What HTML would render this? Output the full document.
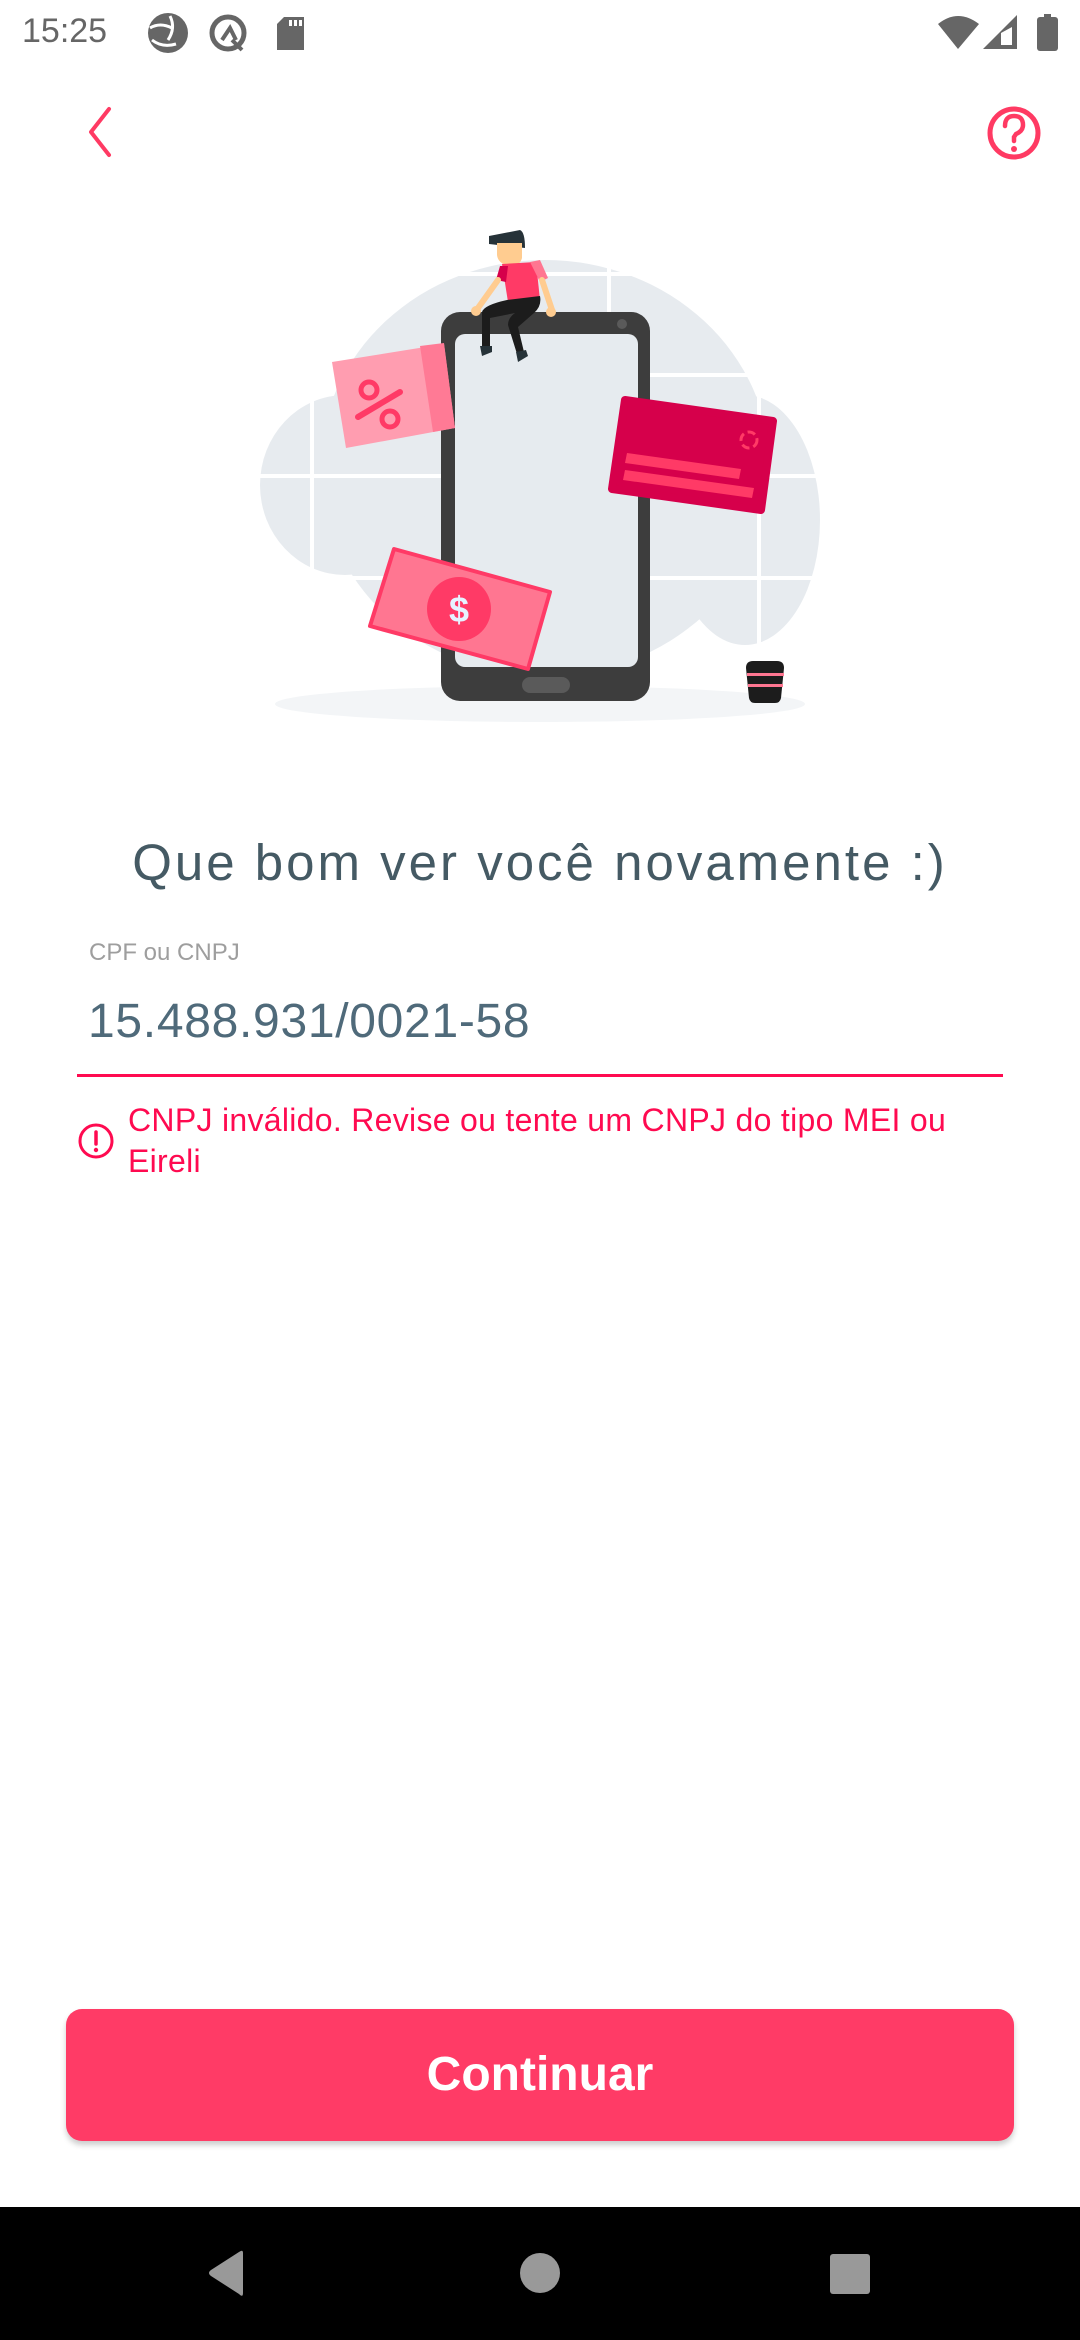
<!DOCTYPE html>
<html><head><meta charset="utf-8"><style>
*{margin:0;padding:0;box-sizing:border-box}
body{width:1080px;height:2340px;background:#fff;position:relative;overflow:hidden;font-family:"Liberation Sans",sans-serif}
.a{position:absolute;white-space:nowrap}
</style></head><body>
<div class="a" style="left:22px;top:14px;font-size:34px;line-height:34px;color:#666">15:25</div>
<svg class="a" style="left:0;top:0" width="1080" height="70">
<circle cx="168" cy="33" r="20" fill="#666"/>
<path d="M150 28 Q160 22 172 28 M170 16 Q176 28 168 40 M152 40 Q162 48 176 44" stroke="#fff" stroke-width="3" fill="none"/>
<circle cx="228" cy="33" r="16" fill="none" stroke="#666" stroke-width="5"/>
<path d="M222 40 L230 28 L236 40 M232 40 L242 50" stroke="#666" stroke-width="4" fill="none"/>
<path d="M284 17 H304 V50 H277 V24 Z" fill="#666"/>
<rect x="289" y="20" width="3" height="6" fill="#fff"/><rect x="294" y="20" width="3" height="6" fill="#fff"/><rect x="299" y="20" width="3" height="6" fill="#fff"/>
<path d="M938 24 Q958 8 979 24 L958 49 Z" fill="#666"/>
<path d="M1017 15 V49 H983 Z" fill="#666"/><path d="M1001 33 V45 H1012 V27 Z" fill="#fff"/>
<rect x="1044" y="14" width="7" height="4" fill="#666"/><rect x="1037" y="17" width="21" height="34" rx="3" fill="#666"/>
</svg>
<svg class="a" style="left:0;top:0" width="1080" height="200">
<path d="M109 109 L91 132 L109 155" stroke="#ff3a63" stroke-width="4" fill="none" stroke-linecap="round" stroke-linejoin="round"/>
<circle cx="1014" cy="133" r="24" fill="none" stroke="#ff3a63" stroke-width="5"/>
<path d="M1005 126 Q1005 116 1014 116 Q1023 116 1023 125 Q1023 131 1016 134 L1014 137 V141" stroke="#ff3a63" stroke-width="4.5" fill="none" stroke-linecap="round"/>
<circle cx="1014" cy="149" r="3" fill="#ff3a63"/>
</svg>
<svg class="a" style="left:0;top:200px" width="1080" height="560" viewBox="0 200 1080 560">
<ellipse cx="540" cy="704" rx="265" ry="18" fill="#f3f5f7"/>
<ellipse cx="545" cy="468" rx="225" ry="208" fill="#e7ebef"/>
<ellipse cx="345" cy="485" rx="85" ry="90" fill="#e7ebef"/>
<ellipse cx="745" cy="520" rx="75" ry="125" fill="#e7ebef"/>
<g stroke="#fff" stroke-width="4">
<line x1="250" y1="274" x2="830" y2="274"/><line x1="250" y1="375" x2="830" y2="375"/>
<line x1="250" y1="476" x2="830" y2="476"/><line x1="250" y1="578" x2="830" y2="578"/>
<line x1="312" y1="380" x2="312" y2="640"/><line x1="609" y1="262" x2="609" y2="680"/>
<line x1="759" y1="320" x2="759" y2="680"/>
</g>
<rect x="441" y="312" width="209" height="389" rx="19" fill="#3d3d3d"/>
<rect x="455" y="334" width="183" height="333" rx="10" fill="#e6ebef"/>
<rect x="522" y="677" width="48" height="16" rx="8" fill="#5a5a5a"/>
<circle cx="622" cy="324" r="5" fill="#5a5a5a"/>
<path d="M332 362 L444 344 L455 428 L346 448 Z" fill="#ff9db0"/>
<path d="M420 346 L444 343 L455 428 L433 432 Z" fill="#ff7a95"/>
<line x1="358" y1="417" x2="400" y2="392" stroke="#ff3a66" stroke-width="6" stroke-linecap="round"/>
<circle cx="369" cy="390" r="8" fill="none" stroke="#ff3a66" stroke-width="5"/>
<circle cx="390" cy="419" r="8" fill="none" stroke="#ff3a66" stroke-width="5"/>
<path d="M625 400 L773 421 L761 510 L612 489 Z" fill="#d6004b" stroke="#d6004b" stroke-width="8" stroke-linejoin="round"/>
<path d="M627 453 L741 469 L739 479 L625 463 Z" fill="#ff3a66"/>
<path d="M625 470 L754 488 L752 498 L623 480 Z" fill="#ff3a66"/>
<circle cx="749" cy="440" r="8" fill="none" stroke="#ff3a66" stroke-width="3" stroke-dasharray="8 4"/>
<path d="M394 549 L550 592 L528 669 L370 626 Z" fill="#ff7691" stroke="#ff3a66" stroke-width="4" stroke-linejoin="round"/>
<circle cx="459" cy="609" r="32" fill="#ff3a66"/>
<text x="459" y="622" font-size="36" font-weight="bold" fill="#e6f2ff" text-anchor="middle" font-family="Liberation Sans,sans-serif">$</text>
<path d="M746 668 Q746 661 753 661 H777 Q784 661 784 668 L781 698 Q780 703 775 703 H755 Q750 703 749 698 Z" fill="#1c1c1c"/>
<rect x="747" y="673" width="37" height="3" fill="#ff7691"/><rect x="748" y="684" width="35" height="3" fill="#ff7691"/>
<path d="M489 236 L520 230 Q525 232 525 248 L489 244 Z" fill="#263238"/>
<path d="M497 243 H522 V258 Q520 266 510 266 Q498 264 497 255 Z" fill="#ffcc90"/>
<path d="M502 264 L536 262 L540 300 L508 302 Z" fill="#ff3a66"/>
<path d="M500 266 L508 266 L506 282 L496 280 Z" fill="#d6004b"/>
<path d="M530 262 L540 260 L548 278 L540 282 Z" fill="#ff7691"/>
<path d="M498 280 L478 308 M542 280 L552 310" stroke="#ffcc90" stroke-width="6" stroke-linecap="round"/>
<circle cx="476" cy="311" r="5" fill="#ffcc90"/><circle cx="551" cy="312" r="5" fill="#ffcc90"/>
<path d="M507 300 L540 296 Q542 306 534 313 L518 327 L524 352 L517 354 L508 325 Q508 318 515 313 L490 318 L490 348 L482 348 L482 312 Q484 305 507 300 Z" fill="#1c1c1c"/>
<path d="M480 346 L492 346 L492 352 L482 356 Z" fill="#263238"/><path d="M516 352 L526 350 L528 356 L518 362 Z" fill="#263238"/>
</svg>
<div class="a" style="left:0;width:1080px;text-align:center;top:837px;font-size:51px;line-height:51px;color:#455a64;letter-spacing:3px">Que bom ver você novamente :)</div>
<div class="a" style="left:89px;top:941px;font-size:24px;line-height:24px;color:#9e9e9e">CPF ou CNPJ</div>
<div class="a" style="left:88px;top:998px;font-size:48px;line-height:48px;color:#4f6a7a;letter-spacing:0.7px">15.488.931/0021-58</div>
<div class="a" style="left:77px;top:1074px;width:926px;height:3px;background:#ff0a50"></div>
<svg class="a" style="left:76px;top:1121px" width="40" height="40"><circle cx="20" cy="20" r="16" fill="none" stroke="#ff0a50" stroke-width="3"/><line x1="20" y1="11" x2="20" y2="23" stroke="#ff0a50" stroke-width="3.5" stroke-linecap="round"/><circle cx="20" cy="29" r="2.2" fill="#ff0a50"/></svg>
<div class="a" style="left:128px;top:1100px;font-size:32px;line-height:41px;color:#ff0a50;white-space:normal;width:830px;letter-spacing:0.3px">CNPJ inválido. Revise ou tente um CNPJ do tipo MEI ou Eireli</div>
<div class="a" style="left:66px;top:2009px;width:948px;height:132px;border-radius:16px;background:#ff3b66;box-shadow:0 4px 6px rgba(0,0,0,0.2);color:#fff;font-weight:bold;font-size:48px;line-height:132px;text-align:center">Continuar</div>
<div class="a" style="left:0;top:2207px;width:1080px;height:133px;background:#000"></div>
<svg class="a" style="left:0;top:2207px" width="1080" height="133">
<path d="M243 46 L243 86 Q243 91 239 87 L211 69 Q207 66 211 63 L239 45 Q243 42 243 46 Z" fill="#999"/>
<circle cx="540" cy="66" r="20" fill="#999"/>
<rect x="830" y="47" width="40" height="40" rx="3" fill="#999"/>
</svg>
</body></html>
